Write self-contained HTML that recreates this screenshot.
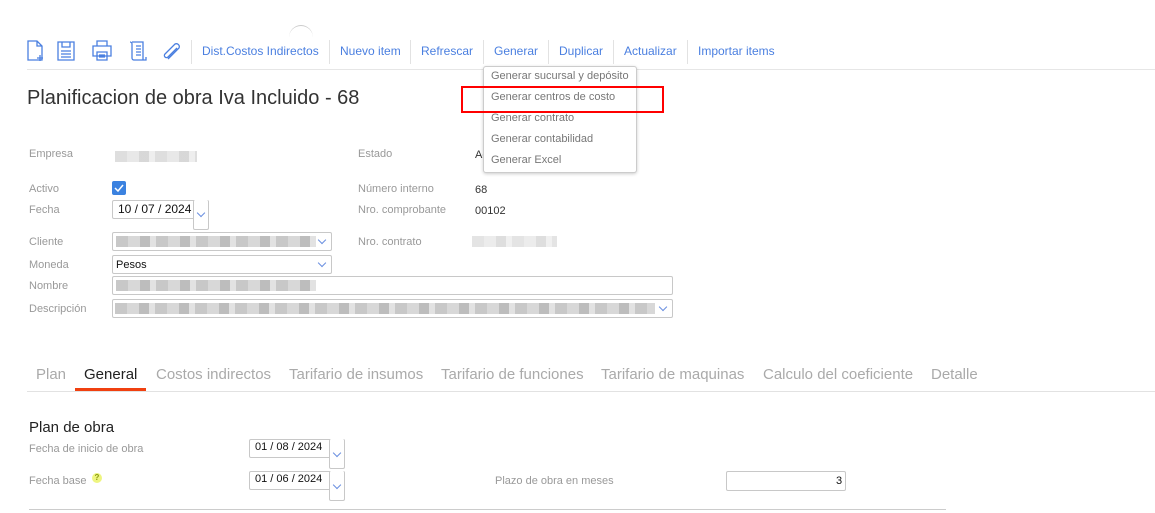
<!DOCTYPE html>
<html><head><meta charset="utf-8"><style>
body{margin:0;width:1155px;height:513px;background:#fff;font-family:"Liberation Sans",sans-serif;position:relative;overflow:hidden}
.a{position:absolute;white-space:nowrap}
.tb{color:#4a7fe0;font-size:12px;top:44px}
.sep{position:absolute;top:40px;width:1px;height:24px;background:#e2e2e2}
.lbl{color:#999;font-size:11px}
.val{color:#333;font-size:11px}
.box{position:absolute;border:1px solid #c8c8c8;border-radius:2px;background:#fff;box-sizing:border-box}
.chev{position:absolute;width:5px;height:5px;border-right:1.3px solid #6a8fe0;border-bottom:1.3px solid #6a8fe0;transform:rotate(45deg)}
.blur{position:absolute;background:repeating-linear-gradient(90deg,#c8c8c8 0 12px,#d8d8d8 12px 24px,#bdbdbd 24px 34px,#e2e2e2 34px 40px);height:11px}
.dd{color:#777;font-size:11px;left:491px}
.tab{font-size:15px;color:#aaa;top:366px}
</style></head><body>
<div class="a" style="left:289px;top:25px;width:24px;height:24px;border-radius:50%;border-top:1px solid #ccc"></div>
<svg class="a" style="left:26px;top:40px" width="160" height="22" fill="none" stroke="#4a7fe0" stroke-width="1.3">
<path d="M2 1h9l5 5v14H2z M11 1v5h5 M14 15v6 M11 18h6"/>
<path d="M32 2h16v18H32z M36 2v5h8V2 M35 11h10 M35 14h10 M35 17h10"/>
<path d="M71 6V1h10v5 M67 6h18v10H67z M71 12h10v8H71z M73 15h6 M73 17h6"/>
<path d="M106 2h11v18h-9 M104 2a2 2 0 0 1 2 2v14a2 2 0 0 0 2 2 M110 6h5 M110 9h5 M110 12h5 M110 15h5 M117 20h3v-3"/>
<path d="M142 19 l11-11a3 3 0 0 0-4-4l-10 10a2 2 0 0 0 3 3l9-9"/>
</svg>
<div class="sep" style="left:191px"></div>
<div class="a tb" style="left:202px">Dist.Costos Indirectos</div>
<div class="sep" style="left:329px"></div>
<div class="a tb" style="left:340px">Nuevo item</div>
<div class="sep" style="left:410px"></div>
<div class="a tb" style="left:421px">Refrescar</div>
<div class="sep" style="left:483px"></div>
<div class="a tb" style="left:494px">Generar</div>
<div class="sep" style="left:548px"></div>
<div class="a tb" style="left:559px">Duplicar</div>
<div class="sep" style="left:613px"></div>
<div class="a tb" style="left:624px">Actualizar</div>
<div class="sep" style="left:687px"></div>
<div class="a tb" style="left:698px">Importar items</div>
<div class="a" style="left:27px;top:69px;width:1128px;height:1px;background:#e6e6e6"></div>
<div class="a" style="left:27px;top:87px;font-size:20px;color:#333">Planificacion de obra Iva Incluido - 68</div>

<div class="a lbl" style="left:29px;top:148px">Empresa</div>
<div class="blur" style="left:115px;top:151px;width:82px;opacity:.6"></div>
<div class="a lbl" style="left:358px;top:148px">Estado</div>
<div class="a val" style="left:475px;top:149px">Ac</div>
<div class="a lbl" style="left:29px;top:183px">Activo</div>
<div class="a" style="left:112px;top:181px;width:14px;height:14px;background:#3b82e0;border-radius:2px"><svg width="14" height="14"><path d="M3 7l3 3 5-6" stroke="#fff" stroke-width="1.5" fill="none"/></svg></div>
<div class="a lbl" style="left:358px;top:183px">Número interno</div>
<div class="a val" style="left:475px;top:184px">68</div>
<div class="a lbl" style="left:29px;top:204px">Fecha</div>
<div class="box" style="left:112px;top:200px;width:97px;height:19px"></div>
<div class="box" style="left:193px;top:200px;width:16px;height:30px;border-top:none"></div>
<div class="a val" style="left:118px;top:202px;font-size:12px;color:#111">10 / 07 /  2024</div>
<div class="chev" style="left:198px;top:210px"></div>
<div class="a lbl" style="left:358px;top:204px">Nro. comprobante</div>
<div class="a val" style="left:475px;top:205px">00102</div>
<div class="a lbl" style="left:29px;top:236px">Cliente</div>
<div class="box" style="left:112px;top:232px;width:220px;height:19px"></div>
<div class="blur" style="left:116px;top:236px;width:200px"></div>
<div class="chev" style="left:319px;top:237px"></div>
<div class="a lbl" style="left:358px;top:236px">Nro. contrato</div>
<div class="blur" style="left:472px;top:236px;width:85px;opacity:.5"></div>
<div class="a lbl" style="left:29px;top:259px">Moneda</div>
<div class="box" style="left:112px;top:255px;width:220px;height:19px"></div>
<div class="a val" style="left:116px;top:259px;color:#111">Pesos</div>
<div class="chev" style="left:319px;top:260px"></div>
<div class="a lbl" style="left:29px;top:280px">Nombre</div>
<div class="box" style="left:112px;top:276px;width:561px;height:19px"></div>
<div class="blur" style="left:116px;top:280px;width:200px"></div>
<div class="a lbl" style="left:29px;top:303px">Descripción</div>
<div class="box" style="left:112px;top:299px;width:561px;height:19px"></div>
<div class="blur" style="left:115px;top:303px;width:540px"></div>
<div class="chev" style="left:660px;top:304px"></div>

<div class="a tab" style="left:36px">Plan</div>
<div class="a tab" style="left:84px;color:#222">General</div>
<div class="a" style="left:75px;top:388px;width:71px;height:3px;background:#f04010"></div>
<div class="a tab" style="left:156px">Costos indirectos</div>
<div class="a tab" style="left:289px">Tarifario de insumos</div>
<div class="a tab" style="left:441px">Tarifario de funciones</div>
<div class="a tab" style="left:601px">Tarifario de maquinas</div>
<div class="a tab" style="left:763px">Calculo del coeficiente</div>
<div class="a tab" style="left:931px">Detalle</div>
<div class="a" style="left:27px;top:391px;width:1128px;height:1px;background:#e2e2e2"></div>

<div class="a" style="left:29px;top:419px;font-size:15px;color:#222">Plan de obra</div>
<div class="a lbl" style="left:29px;top:443px">Fecha de inicio de obra</div>
<div class="box" style="left:249px;top:439px;width:96px;height:19px"></div>
<div class="box" style="left:329px;top:439px;width:16px;height:30px;border-top:none"></div>
<div class="a val" style="left:255px;top:441px;font-size:11px;color:#111">01 / 08 /  2024</div>
<div class="chev" style="left:334px;top:450px"></div>
<div class="a lbl" style="left:29px;top:475px">Fecha base</div>
<div class="a" style="left:92px;top:473px;width:10px;height:10px;border-radius:50%;background:#eef580;color:#8a9a10;font-size:8px;text-align:center;line-height:10px;font-weight:bold">?</div>
<div class="box" style="left:249px;top:471px;width:96px;height:19px"></div>
<div class="box" style="left:329px;top:471px;width:16px;height:30px;border-top:none"></div>
<div class="a val" style="left:255px;top:473px;font-size:11px;color:#111">01 / 06 /  2024</div>
<div class="chev" style="left:334px;top:482px"></div>
<div class="a lbl" style="left:495px;top:475px">Plazo de obra en meses</div>
<div class="box" style="left:726px;top:471px;width:120px;height:20px"></div>
<div class="a val" style="left:836px;top:475px;color:#111">3</div>
<div class="a" style="left:29px;top:509px;width:917px;height:1px;background:#ccc"></div>

<div class="a" style="left:483px;top:66px;width:152px;height:105px;border:1px solid #ccc;border-radius:3px;background:#fff;box-shadow:0 1px 3px rgba(0,0,0,.2)"></div>
<div class="a dd" style="top:70px">Generar sucursal y depósito</div>
<div class="a dd" style="top:91px">Generar centros de costo</div>
<div class="a dd" style="top:112px">Generar contrato</div>
<div class="a dd" style="top:133px">Generar contabilidad</div>
<div class="a dd" style="top:154px">Generar Excel</div>
<div class="a" style="left:461px;top:86px;width:199px;height:23px;border:2px solid #f00"></div>
</body></html>
